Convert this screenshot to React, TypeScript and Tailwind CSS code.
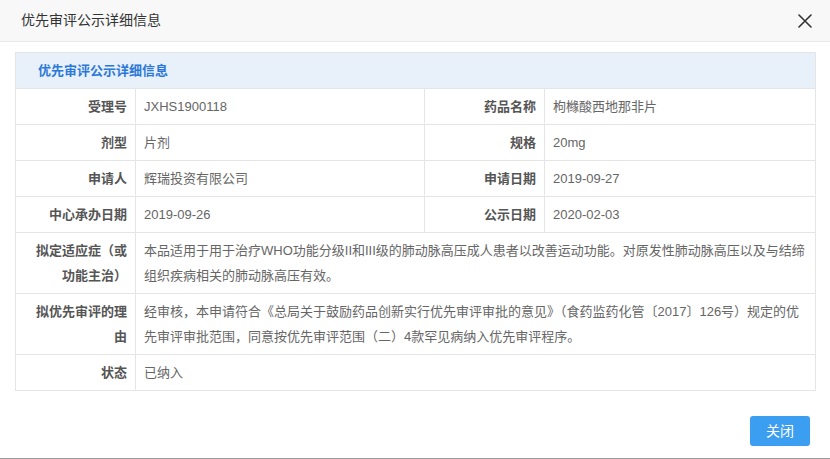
const font = { fontFamily: '"Liberation Sans", "Noto Sans CJK SC", sans-serif' };

function Label({ children }: { children: React.ReactNode }) {
  return (
    <td className="w-[120px] border border-[#e5e5e5] pl-[12px] pr-[8px] py-[5px] text-right font-bold text-[#555] align-middle">
      {children}
    </td>
  );
}

function Value({ children, span }: { children: React.ReactNode; span?: number }) {
  return (
    <td colSpan={span} className="border border-[#e5e5e5] pl-[8px] pr-[4px] py-[5px] text-left text-[#666] align-middle">
      {children}
    </td>
  );
}

export default function App() {
  return (
    <div className="w-[830px] h-[459px] bg-white flex flex-col border-b border-[#9a9a9a]" style={font}>
      <div className="h-[42px] shrink-0 bg-[#f8f8f8] border-b border-[#e8e8e8] flex items-center justify-between pl-[21px] pr-[18px]">
        <span className="text-[14px] text-[#333]">优先审评公示详细信息</span>
        <svg width="14" height="14" viewBox="0 0 14 14" className="mt-[1px]">
          <path d="M1 1L13 13M13 1L1 13" stroke="#333" strokeWidth="1.6" strokeLinecap="round" />
        </svg>
      </div>

      <div className="px-[15px] pt-[10px] flex-1">
        <table className="w-[800px] border-collapse table-fixed text-[13px] leading-[25px]">
          <colgroup>
            <col className="w-[120px]" />
            <col className="w-[289px]" />
            <col className="w-[120px]" />
            <col className="w-[271px]" />
          </colgroup>
          <tbody>
            <tr>
              <td colSpan={4} className="border border-[#e5e5e5] bg-[#e8f0fa] pl-[22px] py-[5px] font-bold text-[#2b78d8]">
                优先审评公示详细信息
              </td>
            </tr>
            <tr>
              <Label>受理号</Label>
              <Value>JXHS1900118</Value>
              <Label>药品名称</Label>
              <Value>枸橼酸西地那非片</Value>
            </tr>
            <tr>
              <Label>剂型</Label>
              <Value>片剂</Value>
              <Label>规格</Label>
              <Value>20mg</Value>
            </tr>
            <tr>
              <Label>申请人</Label>
              <Value>辉瑞投资有限公司</Value>
              <Label>申请日期</Label>
              <Value>2019-09-27</Value>
            </tr>
            <tr>
              <Label>中心承办日期</Label>
              <Value>2019-09-26</Value>
              <Label>公示日期</Label>
              <Value>2020-02-03</Value>
            </tr>
            <tr>
              <Label>拟定适应症（或功能主治）</Label>
              <Value span={3}>
                <span className="whitespace-nowrap">本品适用于用于治疗WHO功能分级II和III级的肺动脉高压成人患者以改善运动功能。对原发性肺动脉高压以及与结缔</span>
                <br />
                组织疾病相关的肺动脉高压有效。
              </Value>
            </tr>
            <tr>
              <Label>拟优先审评的理由</Label>
              <Value span={3}>
                <span className="whitespace-nowrap">经审核，本申请符合《总局关于鼓励药品创新实行优先审评审批的意见》（食药监药化管〔2017〕126号）规定的优</span>
                <br />
                先审评审批范围，同意按优先审评范围（二）4款罕见病纳入优先审评程序。
              </Value>
            </tr>
            <tr>
              <Label>状态</Label>
              <Value span={3}>已纳入</Value>
            </tr>
          </tbody>
        </table>
      </div>

      <div className="flex justify-end pr-[20px] pb-[12px]">
        <button className="w-[60px] h-[30px] rounded-[3px] bg-[#3c9ef0] text-white text-[14px]">关闭</button>
      </div>
    </div>
  );
}
